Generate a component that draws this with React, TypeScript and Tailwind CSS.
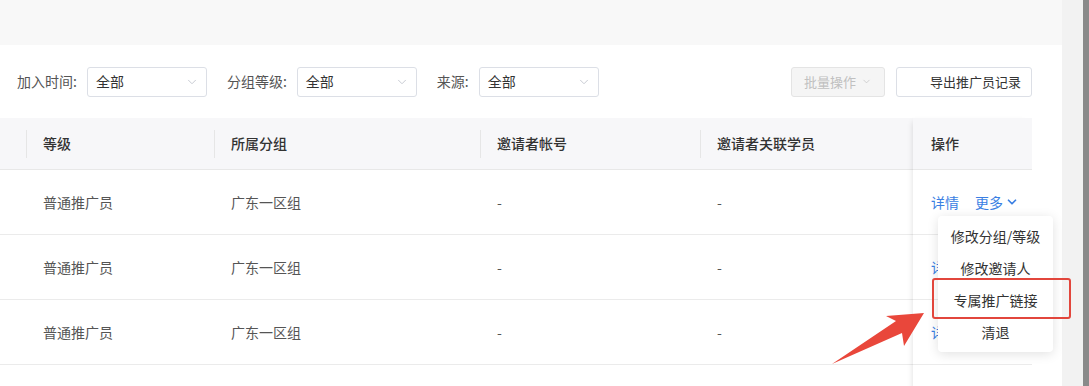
import { ChevronDown } from 'lucide-react';

const cols = [
  { w: 'w-[26px]', title: '' },
  { w: 'w-[188px]', title: '等级' },
  { w: 'w-[266px]', title: '所属分组' },
  { w: 'w-[220px]', title: '邀请者帐号' },
  { w: 'w-[213px]', title: '邀请者关联学员' },
];

const rows = [
  ['', '普通推广员', '广东一区组', '-', '-'],
  ['', '普通推广员', '广东一区组', '-', '-'],
  ['', '普通推广员', '广东一区组', '-', '-'],
  ['', '', '', '', ''],
];

const menu = ['修改分组/等级', '修改邀请人', '专属推广链接', '清退'];

function Select({ label }: { label: string }) {
  return (
    <div className="flex items-center">
      <span className="text-[14px] text-[#555] mr-[10px]">{label}:</span>
      <div className="w-[120px] h-[30px] border border-[#dcdfe6] rounded-[3px] flex items-center justify-between pl-[8px] pr-[7px]">
        <span className="text-[14px] text-[#333]">全部</span>
        <ChevronDown size={14} strokeWidth={1.5} className="text-[#c0c4cc]" />
      </div>
    </div>
  );
}

export default function App() {
  return (
    <div
      className="relative w-[1089px] h-[386px] overflow-hidden flex bg-white"
      style={{ fontFamily: '"Noto Sans CJK SC", "Noto Sans", sans-serif' }}
    >
      <div className="w-[1062px] shrink-0 flex flex-col">
        <div className="h-[45px] shrink-0 bg-[#f8f8f8]" />

        {/* filters */}
        <div className="h-[73px] shrink-0 flex items-center pl-[17px] pr-[30px]">
          <div className="flex items-center gap-[20px]">
            <Select label="加入时间" />
            <Select label="分组等级" />
            <Select label="来源" />
          </div>
          <div className="ml-auto flex items-center gap-[11px]">
            <div className="w-[94px] h-[30px] rounded-[3px] border border-[#e4e4e4] bg-[#f5f5f5] flex items-center justify-center gap-[5px] text-[13px] text-[#c0c0c0]">
              批量操作
              <ChevronDown size={11} strokeWidth={1.5} />
            </div>
            <div className="w-[136px] h-[30px] rounded-[3px] border border-[#dcdfe6] bg-white flex items-center justify-end pr-[10px] text-[13px] text-[#333]">
              导出推广员记录
            </div>
          </div>
        </div>

        {/* table */}
        <div className="flex shrink-0 w-[1032px]">
          <div className="w-[913px]">
            <div className="h-[52px] flex bg-[#f7f7f9] border-b border-[#e8e8e8]">
              {cols.map((c, i) => (
                <div key={i} className={`${c.w} h-full flex items-center`}>
                  {i > 0 && (
                    <div className="w-full h-[28px] border-l border-[#e6e6e6] pl-[16px] flex items-center text-[14px] font-medium text-[#333]">
                      {c.title}
                    </div>
                  )}
                </div>
              ))}
            </div>
            {rows.map((r, ri) => (
              <div key={ri} className="h-[65px] flex border-b border-[#ebebeb]">
                {r.map((cell, ci) => (
                  <div
                    key={ci}
                    className={`${cols[ci].w} h-full flex items-center ${ci > 0 ? 'pl-[17px]' : ''} text-[14px] text-[#555]`}
                  >
                    {cell}
                  </div>
                ))}
              </div>
            ))}
          </div>

          {/* fixed operation column */}
          <div className="w-[119px] bg-white shadow-[-4px_0_6px_-4px_rgba(0,0,0,0.14)]">
            <div className="h-[52px] flex items-center pl-[18px] bg-[#f7f7f9] border-b border-[#e8e8e8] text-[14px] font-medium text-[#333]">
              操作
            </div>
            {rows.map((_, ri) => (
              <div key={ri} className="h-[65px] flex items-center pl-[18px] border-b border-[#ebebeb] text-[14px] text-[#3a7fe3]">
                {ri < 3 && (
                  <>
                    <span>详情</span>
                    <span className="ml-[16px] flex items-center">
                      更多
                      <ChevronDown size={14} strokeWidth={3} className="ml-[2px]" />
                    </span>
                  </>
                )}
              </div>
            ))}
          </div>
        </div>
      </div>

      <div className="w-[21px] shrink-0 bg-[#f2f2f2]" />
      <div className="w-[6px] shrink-0 bg-[#8a8a8a]" />

      {/* dropdown menu */}
      <div className="absolute left-[938px] top-[216px] w-[115px] py-[4px] bg-white rounded-[4px] shadow-[0_2px_12px_rgba(0,0,0,0.12)]">
        {menu.map((m) => (
          <div key={m} className="h-[32px] flex items-center justify-center text-[14px] text-[#333]">
            {m}
          </div>
        ))}
      </div>

      {/* annotation */}
      <div className="absolute left-[932px] top-[278px] w-[139px] h-[41px] border-2 border-[#e2463c] rounded-[3px]" />
      <svg
        className="absolute left-[820px] top-[300px]"
        width="120"
        height="80"
        viewBox="820 300 120 80"
      >
        <polygon
          points="832,364 896,321 886,316 924,313 904,346 902,333"
          fill="#e9473b"
        />
      </svg>
    </div>
  );
}
